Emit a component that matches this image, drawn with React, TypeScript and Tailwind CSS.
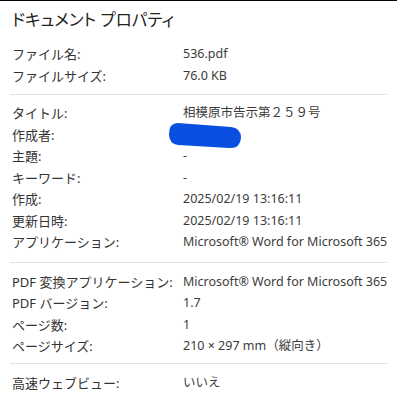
type Row = { label: string; value: string; hidden?: boolean }

const sections: Row[][] = [
  [
    { label: 'ファイル名:', value: '536.pdf' },
    { label: 'ファイルサイズ:', value: '76.0 KB' },
  ],
  [
    { label: 'タイトル:', value: '相模原市告示第２５９号' },
    { label: '作成者:', value: '', hidden: true },
    { label: '主題:', value: '-' },
    { label: 'キーワード:', value: '-' },
    { label: '作成:', value: '2025/02/19 13:16:11' },
    { label: '更新日時:', value: '2025/02/19 13:16:11' },
    { label: 'アプリケーション:', value: 'Microsoft® Word for Microsoft 365' },
  ],
  [
    { label: 'PDF 変換アプリケーション:', value: 'Microsoft® Word for Microsoft 365' },
    { label: 'PDF バージョン:', value: '1.7' },
    { label: 'ページ数:', value: '1' },
    { label: 'ページサイズ:', value: '210 × 297 mm（縦向き）' },
  ],
  [{ label: '高速ウェブビュー:', value: 'いいえ' }],
]

// top/bottom padding per section, tuned to the dividers
const pads = ['pt-[13px] pb-[7px]', 'pt-[8px] pb-[8px]', 'pt-[9px] pb-[5px]', 'pt-[9px] pb-[8px]']

function PropRow({ row }: { row: Row }) {
  return (
    <div className="relative flex h-[21.5px] items-center pl-[2px] text-[13px]">
      <span className="w-[171px] shrink-0 text-[#333]">{row.label}</span>
      <span className="whitespace-nowrap text-[12.5px] text-[#3c3c3c]">{row.value}</span>
      {row.hidden && (
        <svg className="absolute left-[158px] top-[-3px]" width="75" height="28" viewBox="0 0 75 28">
          <path
            d="M10 1 L63 5 Q73 6 73 16 Q72 27 61 26 L10 23 Q1 22 1 12 Q1 1 10 1 Z"
            fill="#0a4fe0"
          />
        </svg>
      )}
    </div>
  )
}

export default function App() {
  return (
    <div
      className="h-[397px] w-[397px] overflow-hidden border-t border-black bg-white"
      style={{ fontFamily: '"Noto Sans", "Noto Sans CJK JP", sans-serif' }}
    >
      <div className="px-[10px]">
        <h1
          className="pl-[2px] pt-[8px] text-[16.5px] leading-[22px] text-[#222]"
          style={{ fontFeatureSettings: '"palt"' }}
        >
          ドキュメント プロパティ
        </h1>
        {sections.map((rows, i) => (
          <div key={i} className={i > 0 ? 'border-t border-[#e3e3e3]' : ''}>
            <div className={pads[i]}>
              {rows.map((r) => (
                <PropRow key={r.label} row={r} />
              ))}
            </div>
          </div>
        ))}
      </div>
    </div>
  )
}
